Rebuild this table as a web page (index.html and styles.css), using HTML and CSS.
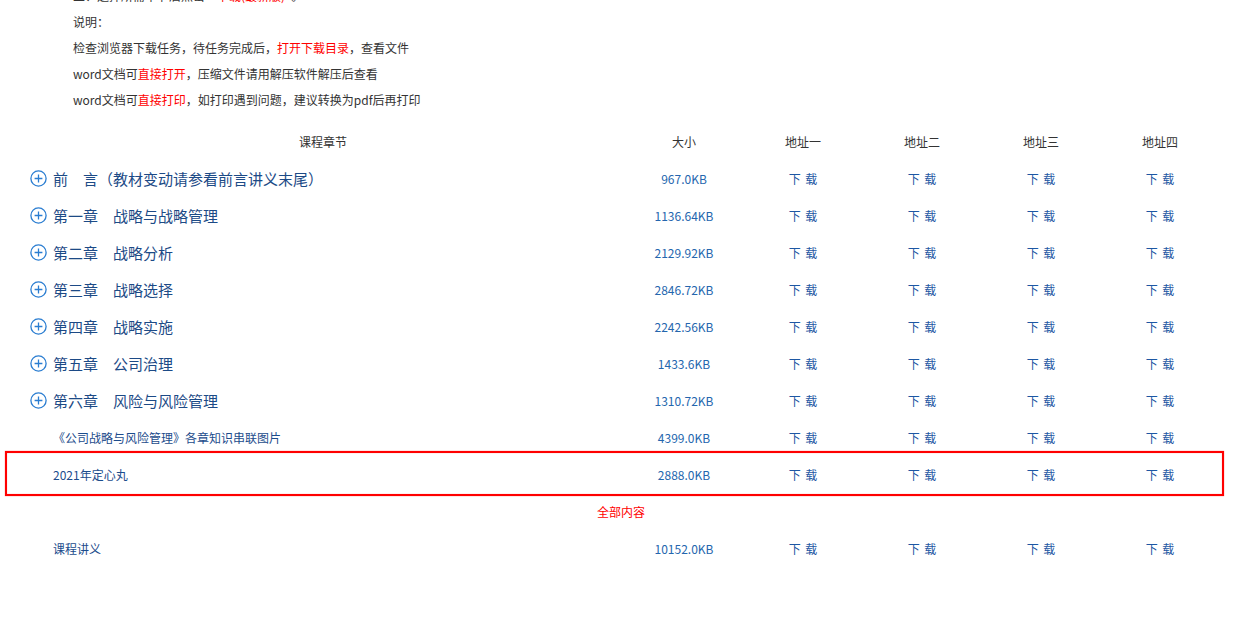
FILE: index.html
```html
<!DOCTYPE html>
<html lang="zh-CN">
<head>
<meta charset="utf-8">
<title>课程章节下载</title>
<link rel="stylesheet" href="styles.css">
</head>
<body>
<div class="intro">
  <p>二、选择所需章节后点击“<span class="red">下载(最新版)</span>”。</p>
  <p>说明：</p>
  <p>检查浏览器下载任务，待任务完成后，<span class="red">打开下载目录</span>，查看文件</p>
  <p>word文档可<span class="red">直接打开</span>，压缩文件请用解压软件解压后查看</p>
  <p>word文档可<span class="red">直接打印</span>，如打印遇到问题，建议转换为pdf后再打印</p>
</div>

<div class="table">
  <div class="row head">
    <div class="cell title-head">课程章节</div>
    <div class="cell">大小</div>
    <div class="cell">地址一</div>
    <div class="cell">地址二</div>
    <div class="cell">地址三</div>
    <div class="cell">地址四</div>
  </div>

  <div class="row">
    <div class="cell chapter"><svg class="plus" viewBox="0 0 17 17"><circle cx="8.5" cy="8.5" r="7.6"/><path d="M4.6 8.5h7.8M8.5 4.6v7.8"/></svg><span>前　言（教材变动请参看前言讲义末尾）</span></div>
    <div class="cell size">967.0KB</div>
    <div class="cell dl">下 载</div><div class="cell dl">下 载</div><div class="cell dl">下 载</div><div class="cell dl">下 载</div>
  </div>
  <div class="row">
    <div class="cell chapter"><svg class="plus" viewBox="0 0 17 17"><circle cx="8.5" cy="8.5" r="7.6"/><path d="M4.6 8.5h7.8M8.5 4.6v7.8"/></svg><span>第一章　战略与战略管理</span></div>
    <div class="cell size">1136.64KB</div>
    <div class="cell dl">下 载</div><div class="cell dl">下 载</div><div class="cell dl">下 载</div><div class="cell dl">下 载</div>
  </div>
  <div class="row">
    <div class="cell chapter"><svg class="plus" viewBox="0 0 17 17"><circle cx="8.5" cy="8.5" r="7.6"/><path d="M4.6 8.5h7.8M8.5 4.6v7.8"/></svg><span>第二章　战略分析</span></div>
    <div class="cell size">2129.92KB</div>
    <div class="cell dl">下 载</div><div class="cell dl">下 载</div><div class="cell dl">下 载</div><div class="cell dl">下 载</div>
  </div>
  <div class="row">
    <div class="cell chapter"><svg class="plus" viewBox="0 0 17 17"><circle cx="8.5" cy="8.5" r="7.6"/><path d="M4.6 8.5h7.8M8.5 4.6v7.8"/></svg><span>第三章　战略选择</span></div>
    <div class="cell size">2846.72KB</div>
    <div class="cell dl">下 载</div><div class="cell dl">下 载</div><div class="cell dl">下 载</div><div class="cell dl">下 载</div>
  </div>
  <div class="row">
    <div class="cell chapter"><svg class="plus" viewBox="0 0 17 17"><circle cx="8.5" cy="8.5" r="7.6"/><path d="M4.6 8.5h7.8M8.5 4.6v7.8"/></svg><span>第四章　战略实施</span></div>
    <div class="cell size">2242.56KB</div>
    <div class="cell dl">下 载</div><div class="cell dl">下 载</div><div class="cell dl">下 载</div><div class="cell dl">下 载</div>
  </div>
  <div class="row">
    <div class="cell chapter"><svg class="plus" viewBox="0 0 17 17"><circle cx="8.5" cy="8.5" r="7.6"/><path d="M4.6 8.5h7.8M8.5 4.6v7.8"/></svg><span>第五章　公司治理</span></div>
    <div class="cell size">1433.6KB</div>
    <div class="cell dl">下 载</div><div class="cell dl">下 载</div><div class="cell dl">下 载</div><div class="cell dl">下 载</div>
  </div>
  <div class="row">
    <div class="cell chapter"><svg class="plus" viewBox="0 0 17 17"><circle cx="8.5" cy="8.5" r="7.6"/><path d="M4.6 8.5h7.8M8.5 4.6v7.8"/></svg><span>第六章　风险与风险管理</span></div>
    <div class="cell size">1310.72KB</div>
    <div class="cell dl">下 载</div><div class="cell dl">下 载</div><div class="cell dl">下 载</div><div class="cell dl">下 载</div>
  </div>
  <div class="row">
    <div class="cell sub">《公司战略与风险管理》各章知识串联图片</div>
    <div class="cell size">4399.0KB</div>
    <div class="cell dl">下 载</div><div class="cell dl">下 载</div><div class="cell dl">下 载</div><div class="cell dl">下 载</div>
  </div>
  <div class="row highlight">
    <div class="cell sub">2021年定心丸</div>
    <div class="cell size">2888.0KB</div>
    <div class="cell dl">下 载</div><div class="cell dl">下 载</div><div class="cell dl">下 载</div><div class="cell dl">下 载</div>
  </div>
  <div class="row all">
    <div class="cell all-cell">全部内容</div>
  </div>
  <div class="row">
    <div class="cell sub">课程讲义</div>
    <div class="cell size">10152.0KB</div>
    <div class="cell dl">下 载</div><div class="cell dl">下 载</div><div class="cell dl">下 载</div><div class="cell dl">下 载</div>
  </div>
</div>
</body>
</html>
```

FILE: styles.css
```css
html, body {
  margin: 0;
  padding: 0;
  background: #fff;
  overflow: hidden;
}
body {
  font-family: "Noto Sans CJK SC", "Noto Sans", sans-serif;
  font-size: 12px;
  color: #333;
}
.intro {
  margin-top: -17px;
  padding-left: 73px;
}
.intro p {
  margin: 0;
  height: 26px;
  line-height: 26px;
  white-space: nowrap;
}
.red {
  color: #f00;
}
.table {
  margin: 10px 0 0 8px;
  width: 1211.5px;
}
.row {
  display: grid;
  grid-template-columns: 616.5px repeat(5, 119px);
  height: 37px;
  align-items: center;
}
.cell {
  text-align: center;
  white-space: nowrap;
  line-height: 18px;
}
.head .cell {
  color: #333;
}
.title-head {
  padding-left: 13.5px;
}
.chapter {
  display: flex;
  align-items: center;
  text-align: left;
  padding-left: 22px;
  font-size: 15px;
  color: #1c4a86;
}
.plus {
  width: 17px;
  height: 17px;
  margin-right: 6px;
  flex: none;
}
.plus circle,
.plus path {
  fill: none;
  stroke: #2a7dd1;
  stroke-width: 1.3;
}
.sub {
  text-align: left;
  padding-left: 45px;
  color: #1c4c8c;
}
.size {
  color: #2466ae;
}
.dl {
  color: #1d57a3;
  word-spacing: 2px;
}
.highlight {
  position: relative;
}
.highlight::after {
  content: "";
  position: absolute;
  top: -5px;
  bottom: -3px;
  left: -3px;
  right: -4px;
  border: 2px solid #f00;
  box-shadow: 0 0 1px rgba(255, 0, 0, 0.6), inset 0 0 1px rgba(255, 0, 0, 0.6);
  pointer-events: none;
}
.all {
  grid-template-columns: 1fr;
}
.all-cell {
  color: #f00;
  padding-left: 14.5px;
}
```
